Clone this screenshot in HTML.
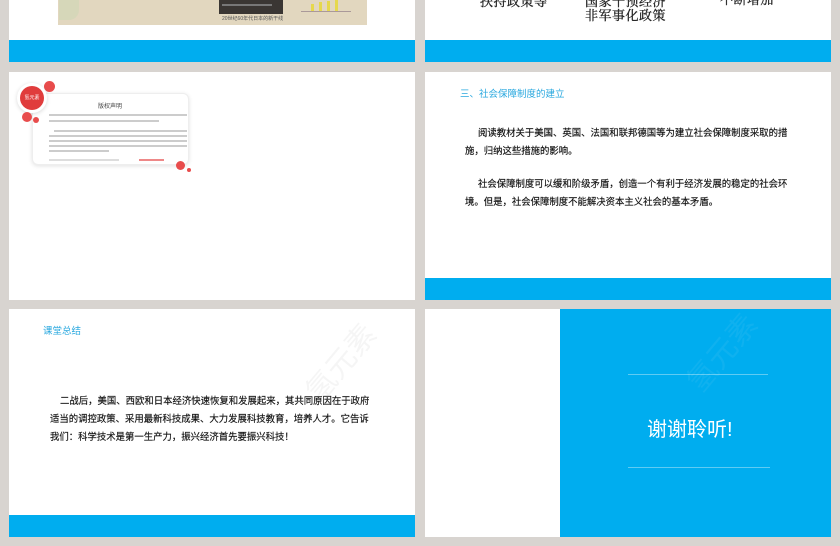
<!DOCTYPE html>
<html><head><meta charset="utf-8"><style>
*{margin:0;padding:0;box-sizing:border-box}
body{width:840px;height:546px;background:#d8d4d0;position:relative;overflow:hidden;font-family:"Liberation Sans","Noto Sans CJK SC",sans-serif}
.s{position:absolute;background:#fff;overflow:hidden}
.band{position:absolute;left:0;right:0;background:#00adef}
.a{position:absolute;white-space:nowrap}
.h{color:#2aa8df;font-size:9.5px}
.p{font-size:9.4px;color:#111;line-height:18px;-webkit-text-stroke:0.15px #111}
.serif{font-family:"Liberation Serif","Noto Serif CJK SC",serif;font-size:13px;color:#222;letter-spacing:0.5px;-webkit-text-stroke:0.3px #222}
.wm{color:rgba(0,0,0,0.04);font-size:30px;transform:rotate(-50deg)}
</style></head><body>
<div class="s" style="left:9px;top:0;width:406px;height:62px">
  <div class="a" style="left:49px;top:0;width:309px;height:25px;background:#e2d7bf"></div>
  <div class="a" style="left:50px;top:0;width:20px;height:20px;background:#cfd7b5;border-radius:0 0 10px 0;opacity:.6"></div>
  <div class="a" style="left:210px;top:0;width:64px;height:14px;background:#3a3633"></div>
  <div class="a" style="left:213px;top:4px;width:50px;height:2px;background:#777"></div>
  <div class="a" style="left:213px;top:15px;font-size:5px;color:#555">20世纪60年代日本的新干线</div>
  <div class="a" style="left:302px;top:4px;width:3px;height:7px;background:#e6d84c"></div>
  <div class="a" style="left:310px;top:2px;width:3px;height:9px;background:#e6d84c"></div>
  <div class="a" style="left:318px;top:1px;width:3px;height:10px;background:#e6d84c"></div>
  <div class="a" style="left:326px;top:0;width:3px;height:11px;background:#e6d84c"></div>
  <div class="a" style="left:292px;top:11px;width:50px;height:1px;background:#a99"></div>
  <div class="band" style="top:40px;height:22px"></div>
</div>
<div class="s" style="left:425px;top:0;width:406px;height:62px">
  <div class="a serif" style="left:55px;top:-9px">扶持政策等</div>
  <div class="a serif" style="left:160px;top:-9px">国家干预经济</div>
  <div class="a serif" style="left:160px;top:5px">非军事化政策</div>
  <div class="a serif" style="left:295px;top:-11px">不断增加</div>
  <div class="band" style="top:40px;height:22px"></div>
</div>
<div class="s" style="left:9px;top:72px;width:406px;height:228px">
  <div class="a" style="left:23px;top:21px;width:157px;height:72px;border:1px solid #eee;border-radius:6px;box-shadow:0 1px 4px rgba(0,0,0,.12);background:#fff"></div>
  <div class="a" style="left:35px;top:9px;width:11px;height:11px;border-radius:50%;background:#e84c4c"></div>
  <div class="a" style="left:11px;top:14px;width:24px;height:24px;border-radius:50%;background:#e03c3c;box-shadow:0 0 0 3px #fff,0 1px 4px 3px rgba(0,0,0,.15);color:#fff;font-size:5px;text-align:center;line-height:24px">氢元素</div>
  <div class="a" style="left:13px;top:40px;width:10px;height:10px;border-radius:50%;background:#e84c4c"></div>
  <div class="a" style="left:24px;top:45px;width:6px;height:6px;border-radius:50%;background:#e84c4c"></div>
  <div class="a" style="left:167px;top:89px;width:9px;height:9px;border-radius:50%;background:#e84c4c"></div>
  <div class="a" style="left:178px;top:96px;width:4px;height:4px;border-radius:50%;background:#e84c4c"></div>
  <div class="a" style="left:89px;top:29px;font-size:6px;color:#444">版权声明</div>
  <div class="a" style="left:40px;top:42px;width:138px;height:2px;background:#ccc"></div>
  <div class="a" style="left:40px;top:48px;width:110px;height:2px;background:#ccc"></div>
  <div class="a" style="left:45px;top:58px;width:133px;height:2px;background:#ccc"></div>
  <div class="a" style="left:40px;top:63px;width:138px;height:2px;background:#ccc"></div>
  <div class="a" style="left:40px;top:68px;width:138px;height:2px;background:#ccc"></div>
  <div class="a" style="left:40px;top:73px;width:138px;height:2px;background:#ccc"></div>
  <div class="a" style="left:40px;top:78px;width:60px;height:2px;background:#ccc"></div>
  <div class="a" style="left:40px;top:87px;width:70px;height:2px;background:#ddd"></div>
  <div class="a" style="left:130px;top:87px;width:25px;height:2px;background:#e88"></div>
</div>
<div class="s" style="left:425px;top:72px;width:406px;height:228px">
  <div class="a h" style="left:35px;top:14px">三、社会保障制度的建立</div>
  <div class="a p" style="left:53px;top:52px">阅读教材关于美国、英国、法国和联邦德国等为建立社会保障制度采取的措</div>
  <div class="a p" style="left:40px;top:70px">施，归纳这些措施的影响。</div>
  <div class="a p" style="left:53px;top:103px">社会保障制度可以缓和阶级矛盾，创造一个有利于经济发展的稳定的社会环</div>
  <div class="a p" style="left:40px;top:121px">境。但是，社会保障制度不能解决资本主义社会的基本矛盾。</div>
  <div class="band" style="top:206px;height:22px"></div>
</div>
<div class="s" style="left:9px;top:309px;width:406px;height:228px">
  <div class="a h" style="left:34px;top:14px">课堂总结</div>
  <div class="a wm" style="left:285px;top:30px">氢元素</div>
  <div class="a p" style="left:51px;top:83px">二战后，美国、西欧和日本经济快速恢复和发展起来，其共同原因在于政府</div>
  <div class="a p" style="left:41px;top:101px">适当的调控政策、采用最新科技成果、大力发展科技教育，培养人才。它告诉</div>
  <div class="a p" style="left:41px;top:119px">我们：科学技术是第一生产力，振兴经济首先要振兴科技！</div>
  <div class="band" style="top:206px;height:22px"></div>
</div>
<div class="s" style="left:425px;top:309px;width:406px;height:228px">
  <div class="a" style="left:135px;top:0;width:271px;height:228px;background:#00adef"></div>
  <div class="a" style="left:203px;top:65px;width:140px;height:1px;background:#5fcbf3"></div>
  <div class="a" style="left:203px;top:158px;width:142px;height:1px;background:#5fcbf3"></div>
  <div class="a" style="left:222px;top:104px;font-size:20px;color:#fff">谢谢聆听!</div>
  <div class="a wm" style="left:250px;top:20px;color:rgba(255,255,255,.06)">氢元素</div>
</div>
</body></html>
